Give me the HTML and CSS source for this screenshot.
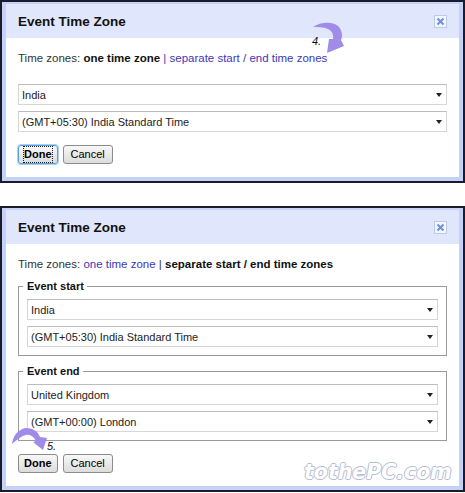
FILE: index.html
```html
<!DOCTYPE html>
<html lang="en">
  <head>
    <meta charset="UTF-8" />
    <meta name="viewport" content="width=device-width, initial-scale=1.0" />
    <title>Event Time Zone</title>
    <link rel="stylesheet" href="styles.css">
  </head>
  <body>
    <div class="dialog">
      <div class="dialog__header">
        <h2 class="dialog__title">Event Time Zone</h2>
        <svg class="dialog__close" width="13" height="13" viewBox="0 0 13 13">
          <rect x="0.5" y="0.5" width="12" height="12" fill="#f3f6fe" stroke="#bccaf0" />
          <path d="M3.5 3.5 L9.5 9.5 M9.5 3.5 L3.5 9.5" stroke="#6d91d8" stroke-width="2" />
        </svg>
      </div>
      <div class="dialog__body">
        <p class="tz-line">
          Time zones: <span class="tz-line__current">one time zone</span>
          <a href="#">| separate start / end time zones</a>
        </p>
        <div class="selects">
          <div class="select"><span>India</span><span class="select__caret"></span></div>
          <div class="select"><span>(GMT+05:30) India Standard Time</span><span class="select__caret"></span></div>
        </div>
        <div class="buttons">
          <button class="btn btn--primary btn--focus"><span class="btn__focus">Done</span></button>
          <button class="btn">Cancel</button>
        </div>
      </div>
      <svg class="note note--four" width="50" height="40" viewBox="0 0 50 40">
        <path d="M13 9 C20 4 32 3 38 8 C42 12 43 18 41 22 L44 28 L27 35 L29 21 L33 21 C34 17 32 13 28 11 C23 9 18 9 13 9 Z" fill="#a18be8" />
        <text x="12" y="27" font-family="Liberation Sans, Arial, sans-serif" font-size="11" font-style="italic" fill="#111">4.</text>
      </svg>
    </div>

    <div class="dialog">
      <div class="dialog__header">
        <h2 class="dialog__title">Event Time Zone</h2>
        <svg class="dialog__close" width="13" height="13" viewBox="0 0 13 13">
          <rect x="0.5" y="0.5" width="12" height="12" fill="#f3f6fe" stroke="#bccaf0" />
          <path d="M3.5 3.5 L9.5 9.5 M9.5 3.5 L3.5 9.5" stroke="#6d91d8" stroke-width="2" />
        </svg>
      </div>
      <div class="dialog__body">
        <p class="tz-line">
          Time zones: <a href="#">one time zone</a> |
          <span class="tz-line__current">separate start / end time zones</span>
        </p>
        <fieldset class="zone">
          <legend class="zone__legend">Event start</legend>
          <div class="selects">
            <div class="select"><span>India</span><span class="select__caret"></span></div>
            <div class="select"><span>(GMT+05:30) India Standard Time</span><span class="select__caret"></span></div>
          </div>
        </fieldset>
        <fieldset class="zone">
          <legend class="zone__legend">Event end</legend>
          <div class="selects">
            <div class="select"><span>United Kingdom</span><span class="select__caret"></span></div>
            <div class="select"><span>(GMT+00:00) London</span><span class="select__caret"></span></div>
          </div>
        </fieldset>
        <div class="buttons">
          <button class="btn btn--primary">Done</button>
          <button class="btn">Cancel</button>
        </div>
      </div>
      <svg class="note note--five" width="55" height="35" viewBox="0 0 55 35">
        <path d="M7 24 C8 15 14 9 21 8 C27 8 33 11 35 17 L42 18 L38 30 L28 22 L31 21 C29 17 25 14 21 15 C16 16 12 20 7 24 Z" fill="#a18be8" />
        <text x="42" y="30" font-family="Liberation Sans, Arial, sans-serif" font-size="11" font-style="italic" fill="#111">5.</text>
      </svg>
      <div class="watermark">tothePC.com</div>
    </div>
  </body>
</html>
```

FILE: styles.css
```css
* {
  box-sizing: border-box;
}

body {
  margin: 0;
  background: #fff;
  font-family: 'Liberation Sans', Arial, sans-serif;
  font-size: 11px;
  color: #222;
}

.dialog {
  position: relative;
  border: 2px solid #1b1c2b;
  background: #c5d1f6;
  padding: 2px 4px 4px;
}

.dialog + .dialog {
  margin-top: 23px;
}

.dialog__header {
  height: 34px;
  background: #e0e6fb;
  display: flex;
  align-items: center;
  justify-content: space-between;
  padding: 0 12px;
}

.dialog__title {
  margin: 0;
  font-size: 13.5px;
  font-weight: bold;
  color: #111;
}

.dialog__close {
  display: block;
}

.dialog__body {
  background: #fff;
  padding: 13px 12px;
}

.tz-line {
  margin: 0;
  font-size: 11.5px;
  line-height: 14px;
  color: #333;
}

.tz-line__current {
  font-weight: bold;
  color: #111;
}

.tz-line a {
  color: #4236b6;
  text-decoration: none;
}

.dialog__body > .selects {
  margin-top: 19px;
}

.selects {
  display: flex;
  flex-direction: column;
  gap: 6px;
}

.select {
  height: 21px;
  display: flex;
  align-items: center;
  justify-content: space-between;
  padding: 0 4px 0 3px;
  background: #fff;
  border: 1px solid #d6d6d6;
  border-top-color: #bcbcbc;
  color: #222;
}

.select__caret {
  width: 0;
  height: 0;
  border-left: 3.5px solid transparent;
  border-right: 3.5px solid transparent;
  border-top: 4px solid #222;
}

.zone {
  margin: 8px 0 0;
  padding: 6px 8px 8px;
  border: 1px solid #9a9a9a;
  min-width: 0;
}

.zone__legend {
  margin-left: -4px;
  padding: 0 3px 0 4px;
  line-height: 14px;
  font-weight: bold;
  color: #111;
}

.buttons {
  margin-top: 13px;
  display: flex;
  gap: 5px;
}

.btn {
  height: 19px;
  padding: 0 7px;
  font-family: 'Liberation Sans', Arial, sans-serif;
  font-size: 11px;
  line-height: 15px;
  color: #000;
  background: linear-gradient(#f8f8f8, #dcdcdc);
  border: 1px solid #8c8c8c;
  border-radius: 3px;
}

.btn--primary {
  padding: 0 5px;
  font-weight: bold;
}

.btn--focus {
  border-color: #5a9fd9;
  box-shadow: 0 0 0 1px #a9d1f1;
}

.btn__focus {
  display: block;
  outline: 1px dotted #222;
  outline-offset: 0;
}

.note {
  position: absolute;
}

.note--four {
  left: 298px;
  top: 16px;
}

.note--five {
  left: 3px;
  top: 212px;
}

.watermark {
  position: absolute;
  left: 302px;
  top: 252px;
  font-family: 'DejaVu Sans', sans-serif;
  font-size: 20.5px;
  font-weight: bold;
  font-style: italic;
  line-height: 24px;
  color: #fff;
  text-shadow: 1px 0 0 #b4bdd0, -1px 0 0 #b4bdd0, 0 1px 0 #b4bdd0, 0 -1px 0 #b4bdd0;
}
```
